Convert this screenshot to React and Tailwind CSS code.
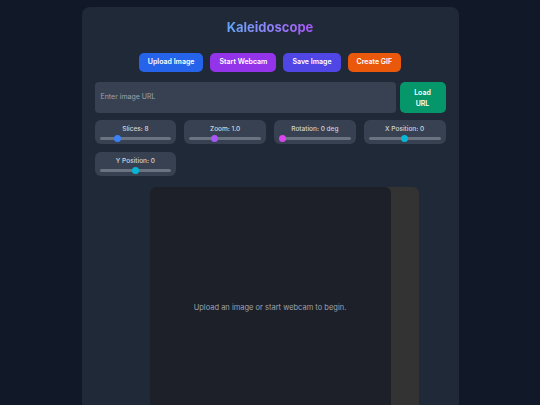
import React from "react";

const buttons = [
  { label: "Upload Image", cls: "bg-[#2563eb]" },
  { label: "Start Webcam", cls: "bg-[#9333ea]" },
  { label: "Save Image", cls: "bg-[#4f46e5]" },
  { label: "Create GIF", cls: "bg-[#ea580c]" },
];

const sliders = [
  { label: "Slices: 8", pos: 22, thumb: "bg-[#3b82f6]" },
  { label: "Zoom: 1.0", pos: 33, thumb: "bg-[#a855f7]" },
  { label: "Rotation: 0 deg", pos: 0, thumb: "bg-[#d946ef]" },
  { label: "X Position: 0", pos: 50, thumb: "bg-[#06b6d4]" },
  { label: "Y Position: 0", pos: 50, thumb: "bg-[#06b6d4]" },
];

function Slider({ s }) {
  return (
    <div className="bg-[#374151] rounded-md h-[24px] px-[5px] pt-[4px] flex flex-col items-center">
      <div className="text-[6.5px] leading-[10px] font-medium text-[#d1d5db]">{s.label}</div>
      <div className="relative w-full h-[3px] mt-[3px] bg-[#6b7280] rounded-full">
        <div
          className={`absolute top-1/2 w-[7px] h-[7px] -mt-[3.5px] -ml-[3.5px] rounded-full ${s.thumb}`}
          style={{ left: `calc(3.5px + ${s.pos} * (100% - 7px) / 100)` }}
        />
      </div>
    </div>
  );
}

export default function App() {
  return (
    <div className="min-h-screen bg-[#111827] pt-[7px] overflow-hidden" style={{ fontFamily: "Inter, 'Noto Sans', sans-serif" }}>
      <div className="w-[377px] mx-auto bg-[#1f2937] rounded-lg px-[13px] pt-[10px] pb-6">
        <h1 className="text-center text-[13px] leading-[20px] font-bold">
          <span className="bg-gradient-to-r from-[#60a5fa] to-[#a855f7] bg-clip-text text-transparent">Kaleidoscope</span>
        </h1>

        {/* Buttons */}
        <div className="flex justify-center gap-[7px] mt-[16px]">
          {buttons.map(b => (
            <button key={b.label} className={`${b.cls} h-[19px] px-[9px] rounded-[5px] text-white text-[7px] font-semibold`}>
              {b.label}
            </button>
          ))}
        </div>

        {/* URL input */}
        <div className="flex gap-[4px] mt-[10px]">
          <div className="flex-1 h-[31px] bg-[#374151] rounded-[4px] flex items-center px-[6px] text-[7px] text-[#9ca3af]">
            Enter image URL
          </div>
          <button className="w-[46px] h-[31px] bg-[#059669] rounded-[5px] text-white text-[7px] leading-[11px] font-semibold">
            Load<br />URL
          </button>
        </div>

        {/* Sliders */}
        <div className="grid grid-cols-4 gap-[8px] mt-[7px]">
          {sliders.map(s => <Slider key={s.label} s={s} />)}
        </div>

        {/* Canvas */}
        <div className="flex justify-center mt-[11px]">
          <div className="relative w-[241px]">
            <div className="w-[269px] h-[242px] bg-[#333333] rounded-md" />
            <div className="absolute inset-0 bg-[#1d2029] rounded-md flex items-center justify-center text-[7.5px] text-[#9ca3af]">
              Upload an image or start webcam to begin.
            </div>
          </div>
        </div>
      </div>
    </div>
  );
}
